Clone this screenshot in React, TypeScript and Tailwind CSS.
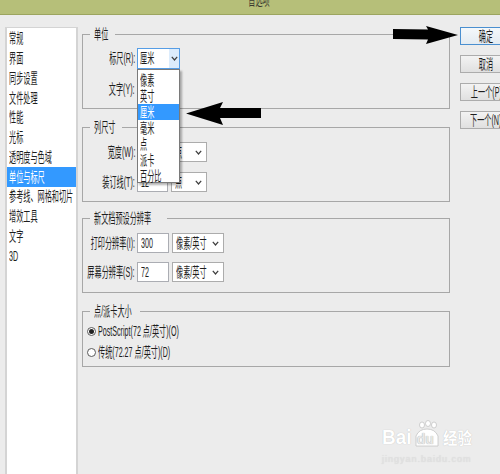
import React from 'react';

type Origin = 'left' | 'right' | 'center';

// squeezed text: the screenshot is narrowed horizontally
function T({ children, origin = 'left' }: { children: React.ReactNode; origin?: Origin }) {
  const o = origin === 'right' ? 'origin-right' : origin === 'center' ? 'origin-center' : 'origin-left';
  return <span className={`inline-block shrink-0 whitespace-nowrap scale-x-[0.51] ${o}`}>{children}</span>;
}

function Chevron() {
  return (
    <svg width="7" height="5" viewBox="0 0 7 5" className="shrink-0">
      <polyline points="0.8,0.8 3.5,4 6.2,0.8" fill="none" stroke="#3d3d3d" strokeWidth="1.2" />
    </svg>
  );
}

function Select({ value, w, className = '' }: { value: string; w: string; className?: string }) {
  return (
    <div className={`flex items-center h-[20px] ${w} bg-white border border-[#acacac] pl-[3px] pr-[4px] ${className}`}>
      <div className="flex-1 min-w-0 flex">
        <T>{value}</T>
      </div>
      <Chevron />
    </div>
  );
}

function Input({ value, w }: { value: string; w: string }) {
  return (
    <div className={`flex items-center h-[20px] ${w} ml-[2px] bg-white border border-[#abadb3] pl-[3px]`}>
      <T>{value}</T>
    </div>
  );
}

function Label({ children }: { children: React.ReactNode }) {
  return (
    <div className="w-[52px] flex justify-end shrink-0">
      <T origin="right">{children}</T>
    </div>
  );
}

function Group({ title, legendW, h, className = '', children }: { title: string; legendW: string; h: string; className?: string; children: React.ReactNode }) {
  return (
    <fieldset className={`w-full min-w-0 border border-[#a7a7a7] ${h} ${className}`}>
      <legend className={`ml-[7px] ${legendW} pl-[4px] leading-[14px]`}>
        <T>{title}</T>
      </legend>
      {children}
    </fieldset>
  );
}

function Radio({ checked, label }: { checked?: boolean; label: string }) {
  return (
    <div className="flex items-center h-[21px] pl-[4px]">
      <div className="w-[9px] h-[9px] rounded-full border border-[#5a5a5a] bg-white flex items-center justify-center shrink-0">
        {checked && <div className="w-[5px] h-[5px] rounded-full bg-[#222]" />}
      </div>
      <div className="ml-[2px]">
        <T>{label}</T>
      </div>
    </div>
  );
}

const sections = ['常规', '界面', '同步设置', '文件处理', '性能', '光标', '透明度与色域', '单位与标尺', '参考线、网格和切片', '增效工具', '文字', '3D'];
const units = ['像素', '英寸', '厘米', '毫米', '点', '派卡', '百分比'];
const buttons = ['确定', '取消', '上一个(P)', '下一个(N)'];

export default function App() {
  return (
    <div className="relative w-[500px] h-[474px] overflow-hidden bg-[#ececec] text-[14px] leading-[15px] text-[#1e1e1e] font-['Liberation_Sans','Noto_Sans_CJK_SC',sans-serif]">
      {/* title bar */}
      <div className="h-[15px] bg-[#b6bf79] border-b border-[#9ca55f] overflow-hidden flex justify-center">
        <div className="-mt-[7px] ml-[18px] text-[#3a3a30]">
          <T origin="center">首选项</T>
        </div>
      </div>

      <div className="flex pt-[12px]">
        {/* section list */}
        <div className="ml-[5px] w-[73px] h-[460px] shrink-0 bg-white border-x-2 border-t border-[#d4d4d4] pt-[1px]">
          {sections.map((s) => (
            <div
              key={s}
              className={`h-[19.75px] flex items-center pl-[2px] ${s === '单位与标尺' ? 'bg-[#3399ff] text-white' : ''}`}
            >
              <T>{s}</T>
            </div>
          ))}
        </div>

        {/* settings */}
        <div className="ml-[4px] w-[368px] shrink-0 flex flex-col">
          <Group title="单位" legendW="w-[25px]" h="h-[82px]">
            <div className="pt-[7px] flex flex-col gap-[10px]">
              <div className="flex items-center h-[21px]">
                <Label>标尺(R):</Label>
                <div className="ml-[2px] flex h-[21px] w-[43px] border border-[#569de5] bg-white">
                  <div className="flex-1 min-w-0 flex items-center pl-[2px]">
                    <T>厘米</T>
                  </div>
                  <div className="w-[10px] bg-[#dcecfc] flex items-center justify-center">
                    <Chevron />
                  </div>
                </div>
              </div>
              <div className="flex items-center h-[21px]">
                <Label>文字(Y):</Label>
                <Select value="厘米" w="w-[43px]" className="ml-[2px] h-[21px]" />
              </div>
            </div>
          </Group>

          <Group title="列尺寸" legendW="w-[32px]" h="h-[82px]" className="mt-[11px]">
            <div className="pt-[8px] flex flex-col gap-[10px]">
              <div className="flex items-center h-[20px]">
                <Label>宽度(W):</Label>
                <Input value="180" w="w-[31px]" />
                <Select value="点" w="w-[36px]" className="ml-[3px]" />
              </div>
              <div className="flex items-center h-[20px]">
                <Label>装订线(T):</Label>
                <Input value="12" w="w-[31px]" />
                <Select value="点" w="w-[36px]" className="ml-[3px]" />
              </div>
            </div>
          </Group>

          <Group title="新文档预设分辨率" legendW="w-[77px]" h="h-[82px]" className="mt-[9px]">
            <div className="pt-[8px] flex flex-col gap-[9px]">
              <div className="flex items-center h-[20px]">
                <Label>打印分辨率(I):</Label>
                <Input value="300" w="w-[32px]" />
                <Select value="像素/英寸" w="w-[52px]" className="ml-[3px]" />
              </div>
              <div className="flex items-center h-[20px]">
                <Label>屏幕分辨率(S):</Label>
                <Input value="72" w="w-[32px]" />
                <Select value="像素/英寸" w="w-[52px]" className="ml-[3px]" />
              </div>
            </div>
          </Group>

          <Group title="点/派卡大小" legendW="w-[50px]" h="h-[63px]" className="mt-[11px]">
            <div className="pt-[3px]">
              <Radio checked label="PostScript(72 点/英寸)(O)" />
              <Radio label="传统(72.27 点/英寸)(D)" />
            </div>
          </Group>
        </div>

        {/* buttons */}
        <div className="ml-[10px] flex flex-col gap-[10px] shrink-0">
          {buttons.map((b, i) => (
            <div
              key={b}
              className={`h-[18px] w-[52px] flex items-center justify-center border bg-linear-to-b ${
                i === 0 ? 'border-[#4a8fd0] from-[#f4f8fb] to-[#e4ebf1]' : 'border-[#acacac] from-[#f3f3f3] to-[#e0e0e0]'
              }`}
            >
              <T origin="center">{b}</T>
            </div>
          ))}
        </div>
      </div>

      {/* open unit menu */}
      <div className="absolute left-[137px] top-[69px] w-[43px] h-[114px] bg-white border border-[#7a7a7a] shadow-[2px_2px_2px_rgba(0,0,0,0.3)] pt-[2px]">
        {units.map((u) => (
          <div key={u} className={`h-[16px] flex items-center pl-[2px] ${u === '厘米' ? 'bg-[#3399ff] text-white' : ''}`}>
            <T>{u}</T>
          </div>
        ))}
      </div>

      {/* annotation arrows */}
      <svg className="absolute inset-0 pointer-events-none" width="500" height="474" viewBox="0 0 500 474">
        <polygon points="186,113.5 223,102 220,108 261,108 261,118 220,118 223,125" fill="#000" />
        <polygon points="393,29 428,29.5 426,26 458,35 426,44 428,39.5 393,39" fill="#000" />
      </svg>

      {/* watermark */}
      <div className="absolute left-[382px] top-[420px] text-white">
        <div className="flex items-end h-[28px] font-bold text-[21px] leading-[22px] [text-shadow:0_0_1px_#b5b5b5]">
          <span className="inline-block scale-x-[0.9] origin-left">Bai</span>
          <div className="relative ml-[-2px] w-[28px] h-[28px]">
            <svg className="absolute left-0 top-0" width="28" height="28" viewBox="0 0 28 28">
              <ellipse cx="9" cy="5" rx="2.5" ry="3" fill="#fff" stroke="#c4c4c4" strokeWidth="0.8" />
              <ellipse cx="15" cy="3.5" rx="2.5" ry="3" fill="#fff" stroke="#c4c4c4" strokeWidth="0.8" />
              <ellipse cx="21" cy="5" rx="2.5" ry="3" fill="#fff" stroke="#c4c4c4" strokeWidth="0.8" />
              <path d="M3 16 Q6 9 14 9 Q22 9 25 16 L25 26 L3 26 Z" fill="#fff" stroke="#c4c4c4" strokeWidth="0.8" />
            </svg>
            <span className="absolute left-[4px] bottom-[1px] text-[14px] leading-[16px] text-[#e8e8e8] [text-shadow:0_0_1px_#9a9a9a]">du</span>
          </div>
          <span className="ml-[2px] text-[16px] leading-[18px] inline-block scale-x-[0.9] origin-left">经验</span>
        </div>
        <div className="mt-[6px] text-[9px] leading-[10px] text-[#e2e2e2] tracking-[1px] [text-shadow:0_0_1px_#d0d0d0]">jingyan.baidu.com</div>
      </div>
    </div>
  );
}
